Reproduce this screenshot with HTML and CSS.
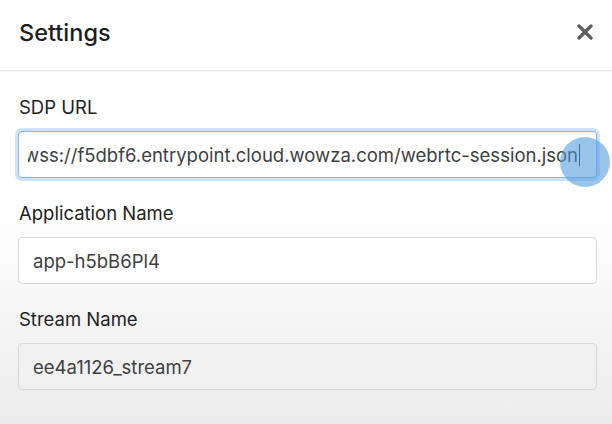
FILE: index.html
```html
<!DOCTYPE html>
<html lang="en">
<head>
<meta charset="utf-8">
<title>Settings</title>
<link rel="stylesheet" href="styles.css">
</head>
<body>
<div class="modal">
  <div class="modal-header">
    <h2 class="modal-title">Settings</h2>
    <button class="close" aria-label="Close">
      <svg width="16" height="16" viewBox="0 0 16 16"><path d="M2 2 L14 14 M14 2 L2 14" stroke="#5f5f5f" stroke-width="3.4" stroke-linecap="round"/></svg>
    </button>
  </div>
  <div class="modal-body">
    <div class="form-group">
      <label class="label">SDP URL</label>
      <div class="field field-focus">
        <span class="field-scroll"><span class="field-text">wss://f5dbf6.entrypoint.cloud.wowza.com/webrtc-session.json</span><span class="caret"></span></span>
      </div>
    </div>
    <div class="form-group">
      <label class="label">Application Name</label>
      <div class="field"><span class="field-text">app-h5bB6Pl4</span></div>
    </div>
    <div class="form-group">
      <label class="label">Stream Name</label>
      <div class="field field-readonly"><span class="field-text">ee4a1126_stream7</span></div>
    </div>
  </div>
  <div class="click-dot"></div>
</div>
</body>
</html>
```
FILE: styles.css
```css
html, body {
  margin: 0;
  padding: 0;
}
body {
  width: 612px;
  height: 424px;
  overflow: hidden;
  font-family: Inter, "Liberation Sans", Arial, sans-serif;
  background: linear-gradient(to bottom, #ffffff 0, #ffffff 210px, #f4f4f4 330px, #ececec 424px);
  color: #212529;
}
.modal {
  position: relative;
  height: 424px;
}
.modal-header {
  height: 71px;
  box-sizing: border-box;
  display: flex;
  align-items: center;
  justify-content: space-between;
  padding: 0 19px 6px 19px;
  border-bottom: 1px solid #e4e4e4;
  box-shadow: 0 1px 2px rgba(0,0,0,0.04);
  background: #fff;
}
.modal-title {
  margin: 0;
  font-size: 23.5px;
  font-weight: 500;
  color: #1e1e1e;
}
.close {
  border: 0;
  background: transparent;
  padding: 0;
  margin: 0;
  width: 16px;
  height: 16px;
  display: flex;
}
.modal-body {
  padding: 23px 15px 0 18px;
  display: flex;
  flex-direction: column;
  gap: 22px;
}
.form-group {
  display: flex;
  flex-direction: column;
}
.label {
  font-size: 18.5px;
  line-height: 27px;
  color: #222;
  margin-bottom: 10px;
  padding-left: 1px;
}
.field {
  height: 47px;
  box-sizing: border-box;
  border: 1px solid #d6d8da;
  border-radius: 4px;
  background: #fff;
  display: flex;
  align-items: center;
  padding: 0 13px 0 14px;
  font-size: 18.5px;
  color: #3d3f42;
  overflow: hidden;
  white-space: nowrap;
}
.field-readonly {
  background: #f1f1f1;
}
.field-focus {
  border-color: #8ab8ea;
  box-shadow: 0 0 0 3px rgba(120,170,235,0.35);
  padding-left: 9px;
  padding-right: 16px;
}
.field-scroll {
  display: flex;
  justify-content: flex-end;
  align-items: center;
  overflow: hidden;
  width: 100%;
}
.field-text {
  flex: none;
}
.caret {
  flex: none;
  width: 1px;
  height: 22px;
  background: #333;
  margin-left: 1px;
}
.click-dot {
  position: absolute;
  left: 560px;
  top: 137px;
  width: 50px;
  height: 50px;
  border-radius: 50%;
  background: rgba(80, 155, 220, 0.58);
}
```
